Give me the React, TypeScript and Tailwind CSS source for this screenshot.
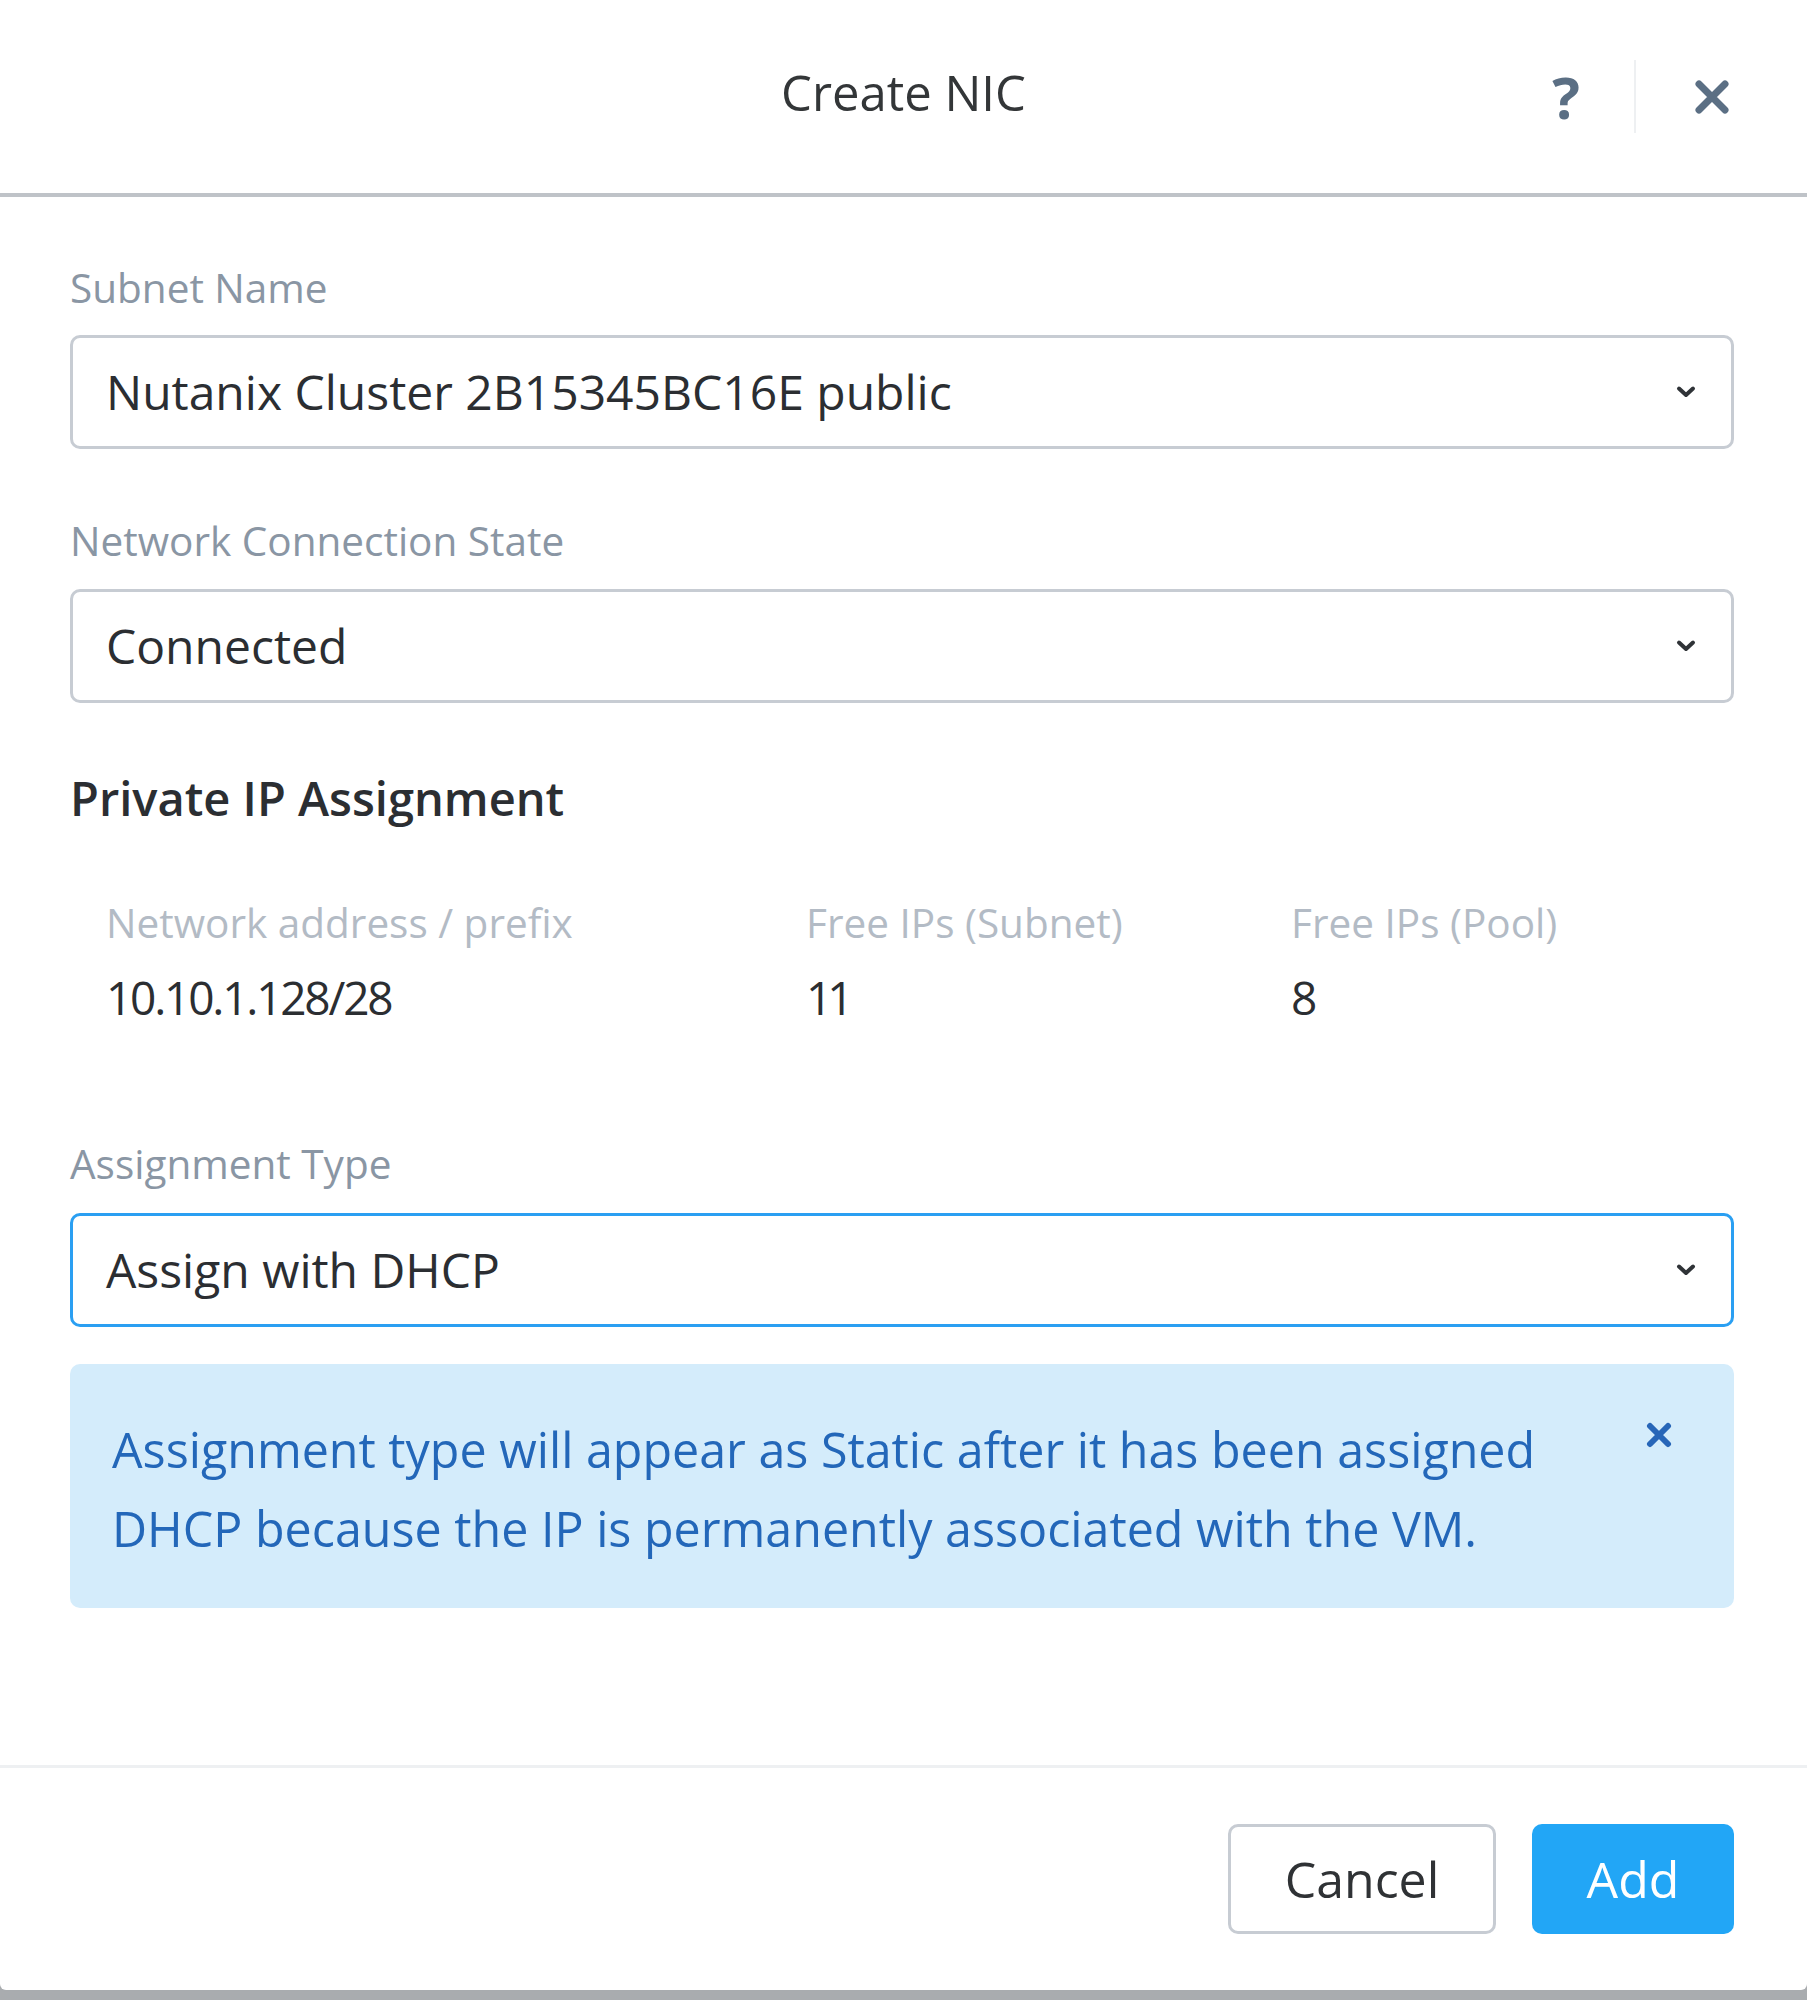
import React from "react";

function Chevron() {
  return (
    <svg width="20" height="14" viewBox="0 0 20 14" className="shrink-0">
      <path d="M3 3.5 L10 10 L17 3.5" fill="none" stroke="#2f3337" strokeWidth="4" strokeLinecap="round" strokeLinejoin="round" />
    </svg>
  );
}

function Select({ value, active }: { value: string; active?: boolean }) {
  return (
    <div
      className={
        active
          ? "h-[114px] rounded-[10px] border-[3px] border-[#2a9ff2] flex items-center justify-between pl-[33px] pr-[35px] bg-white"
          : "h-[114px] rounded-[10px] border-[3px] border-[#c7ccd3] flex items-center justify-between pl-[33px] pr-[35px] bg-white"
      }
    >
      <span className="text-[48px] leading-[58px] text-[#2b2e32]">{value}</span>
      <Chevron />
    </div>
  );
}

export default function App() {
  return (
    <div className="h-[2000px] w-full flex flex-col bg-[#a9acaf] font-['Open_Sans',sans-serif]">
      <div className="h-[1990px] bg-white flex flex-col rounded-b-[6px]">
        {/* Header */}
        <div className="h-[197px] shrink-0 border-b-[4px] border-[#bfc3c8] grid grid-cols-[1fr_auto_1fr] items-center">
          <div />
          <div className="text-[49px] leading-[58px] text-[#333638] pb-[10px]">Create NIC</div>
          <div className="flex items-center justify-end pr-[77px]">
            <span className="text-[58px] leading-[60px] font-bold text-[#5b6f84] w-[28px] text-center">?</span>
            <div className="w-[2px] h-[73px] bg-[#eef0f2] ml-[54px] mr-[58px]" />
            <svg width="36" height="36" viewBox="0 0 36 36">
              <path d="M5 5 L31 31 M31 5 L5 31" stroke="#5b6f84" strokeWidth="7" strokeLinecap="round" />
            </svg>
          </div>
        </div>

        {/* Body */}
        <div className="flex-1 flex flex-col pl-[70px] pr-[73px]">
          <div className="mt-[67px] text-[40.5px] leading-[48px] text-[#8a96a4]">Subnet Name</div>
          <div className="mt-[23px]">
            <Select value="Nutanix Cluster 2B15345BC16E public" />
          </div>

          <div className="mt-[68px] text-[40.5px] leading-[48px] text-[#8a96a4]">Network Connection State</div>
          <div className="mt-[24px]">
            <Select value="Connected" />
          </div>

          <div className="mt-[67px] text-[47px] leading-[56px] font-semibold text-[#2b2e32]">Private IP Assignment</div>

          <div className="mt-[73px] pl-[36px] flex text-[40.5px] leading-[48px] text-[#b3bbc5]">
            <div className="w-[700px]">Network address / prefix</div>
            <div className="w-[485px]">Free IPs (Subnet)</div>
            <div>Free IPs (Pool)</div>
          </div>
          <div className="mt-[22px] pl-[36px] flex text-[46px] leading-[56px] text-[#2b2e32]">
            <div className="w-[700px] tracking-[-2.2px]">10.10.1.128/28</div>
            <div className="w-[485px] tracking-[-5px]">11</div>
            <div>8</div>
          </div>

          <div className="mt-[115px] text-[40.5px] leading-[48px] text-[#8a96a4]">Assignment Type</div>
          <div className="mt-[25px]">
            <Select value="Assign with DHCP" active />
          </div>

          <div className="mt-[37px] h-[244px] rounded-[10px] bg-[#d4ecfb] flex items-start pl-[42px] pr-[62px] pt-[46px]">
            <div className="flex-1 pr-[80px] text-[48.4px] leading-[79px] text-[#2367b9]">
              Assignment type will appear as Static after it has been assigned DHCP because the IP is permanently associated with the VM.
            </div>
            <svg width="26" height="26" viewBox="0 0 26 26" className="mt-[12px]">
              <path d="M4 4 L22 22 M22 4 L4 22" stroke="#2766b8" strokeWidth="6" strokeLinecap="round" />
            </svg>
          </div>

          <div className="flex-1" />
        </div>

        {/* Footer */}
        <div className="h-[225px] shrink-0 border-t-[3px] border-[#eef0f2] flex justify-end items-start pt-[56px] pr-[73px] gap-[36px]">
          <button className="h-[110px] w-[268px] rounded-[10px] border-[3px] border-[#c7ccd3] bg-white text-[50px] text-[#2f3235]">
            Cancel
          </button>
          <button className="h-[110px] w-[202px] rounded-[10px] bg-[#22a6f6] text-[50px] text-white">Add</button>
        </div>
      </div>
    </div>
  );
}
